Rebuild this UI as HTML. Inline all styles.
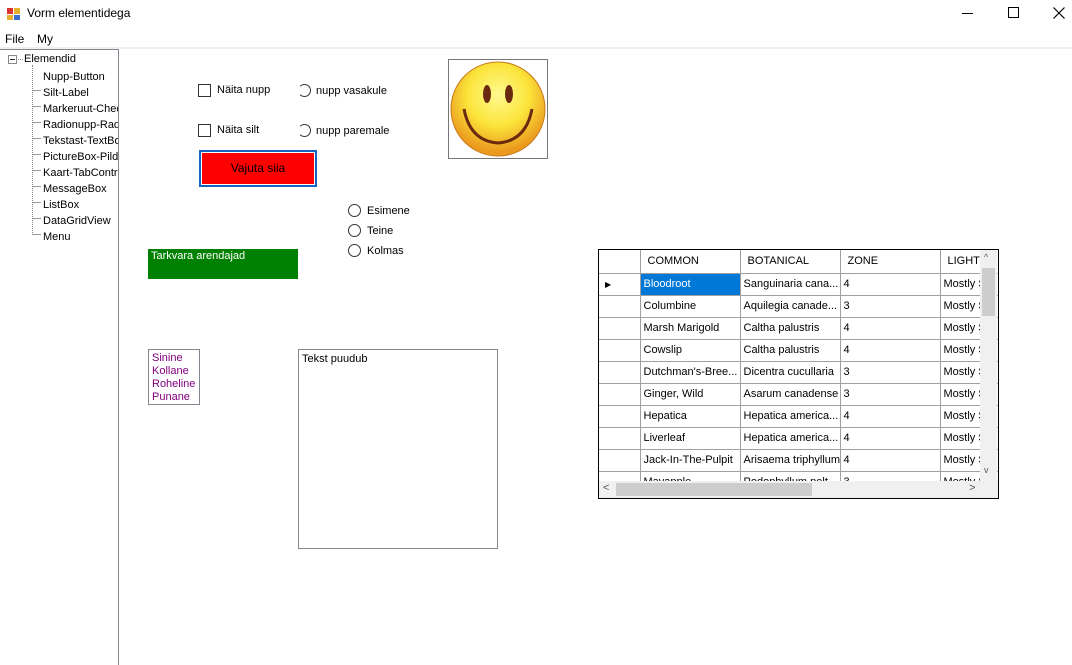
<!DOCTYPE html>
<html><head><meta charset="utf-8"><style>
*{margin:0;padding:0;box-sizing:border-box}
body{width:1072px;height:665px;background:#fff;font-family:"Liberation Sans",sans-serif;font-size:11px;color:#000;position:relative;overflow:hidden}
.a{position:absolute;white-space:nowrap}
.cb{position:absolute;width:13px;height:13px;border:1px solid #333;background:#fff}
.rb{position:absolute;width:13px;height:13px;border:1px solid #333;border-radius:50%;background:#fff}
.grid{position:absolute;left:598px;top:249px;width:401px;height:250px;border:1px solid #000;background:#fff;overflow:hidden}
.grid table{border-collapse:collapse;position:absolute;left:0;top:0;table-layout:fixed;width:401px}
.grid td{height:22px;border-right:1px solid #a0a0a0;border-bottom:1px solid #a0a0a0;padding:0 3px;font-size:11px;white-space:nowrap;overflow:hidden}
.grid tr.h td{height:23px;padding-left:7px}
</style></head><body>
<svg class="a" style="left:7px;top:7px" width="14" height="14"><rect x="0" y="1" width="6" height="6" fill="#d33"/><rect x="7" y="1" width="6" height="6" fill="#e8b030"/><rect x="0" y="8" width="6" height="5" fill="#e8b030"/><rect x="7" y="8" width="6" height="5" fill="#3a6fd0"/></svg>
<div class="a" style="left:27px;top:6px;font-size:12px">Vorm elementidega</div>
<div class="a" style="left:962px;top:13px;width:11px;height:1px;background:#000"></div>
<div class="a" style="left:1008px;top:7px;width:11px;height:11px;border:1px solid #000"></div>
<svg class="a" style="left:1053px;top:7px" width="12" height="12"><path d="M0.5 0.5L11.5 11.5M11.5 0.5L0.5 11.5" stroke="#000" stroke-width="1.2"/></svg>
<div class="a" style="left:5px;top:32px;font-size:12px">File</div>
<div class="a" style="left:37px;top:32px;font-size:12px">My</div>
<div class="a" style="left:0;top:47px;width:1072px;height:2px;background:#f0f0f0"></div>
<!-- tree -->
<div class="a" style="left:0;top:49px;width:119px;height:616px;border-right:1px solid #828790;border-top:1px solid #828790;overflow:hidden">
<div class="a" style="left:8px;top:5px;width:9px;height:9px;border:1px solid #888"><div style="position:absolute;left:1px;top:3px;width:5px;height:1px;background:#333"></div></div>
<div class="a" style="left:18px;top:9px;width:5px;border-top:1px dotted #888"></div>
<div class="a" style="left:24px;top:3px">Elemendid</div>
<div class="a" style="left:32px;top:15px;height:170px;border-left:1px dotted #888"></div>
<div class="a" style="left:43px;top:19px;line-height:16px">
Nupp-Button<br>Silt-Label<br>Markeruut-Chec<br>Radionupp-Rad<br>Tekstast-TextBo<br>PictureBox-Pildil<br>Kaart-TabContro<br>MessageBox<br>ListBox<br>DataGridView<br>Menu</div>
<div class="a" style="left:33px;top:25px;width:8px;height:161px;background:repeating-linear-gradient(to bottom,transparent 0,transparent 15px,#999 15px,#999 16px)"></div>
</div>
<!-- checkboxes -->
<div class="cb" style="left:198px;top:84px"></div><div class="a" style="left:217px;top:84px">Näita nupp</div>
<div class="cb" style="left:198px;top:124px"></div><div class="a" style="left:217px;top:124px">Näita silt</div>
<div class="a" style="left:298px;top:84px;width:13px;height:13px;border:1px solid #333;border-radius:50%;border-left-color:transparent;border-bottom-color:#333"></div>
<div class="a" style="left:316px;top:85px">nupp vasakule</div>
<div class="a" style="left:298px;top:124px;width:13px;height:13px;border:1px solid #333;border-radius:50%;border-left-color:transparent"></div>
<div class="a" style="left:316px;top:125px">nupp paremale</div>
<div class="a" style="left:199px;top:150px;width:118px;height:37px;border:2px solid #1565c0;background:#fff;padding:1px"><div style="background:#f00;width:100%;height:100%;text-align:center;line-height:31px;font-size:12px">Vajuta siia</div></div>
<!-- smiley -->
<div class="a" style="left:448px;top:59px;width:100px;height:100px;border:1px solid #777;background:#fff"></div>
<svg class="a" style="left:450px;top:61px" width="96" height="96"><defs><radialGradient id="g" cx="50%" cy="35%" r="60%"><stop offset="0" stop-color="#fffa90"/><stop offset=".55" stop-color="#fbe43a"/><stop offset="1" stop-color="#eb9a1e"/></radialGradient></defs><circle cx="48" cy="48" r="47" fill="url(#g)" stroke="#c87818"/><ellipse cx="37" cy="33" rx="4" ry="9" fill="#6b2a10"/><ellipse cx="59" cy="33" rx="4" ry="9" fill="#6b2a10"/><path d="M14 48 Q20 80 48 82 Q76 80 82 48" fill="none" stroke="#6b2a10" stroke-width="3"/></svg>
<!-- radios -->
<div class="rb" style="left:348px;top:204px"></div><div class="a" style="left:367px;top:205px">Esimene</div>
<div class="rb" style="left:348px;top:224px"></div><div class="a" style="left:367px;top:225px">Teine</div>
<div class="rb" style="left:348px;top:244px"></div><div class="a" style="left:367px;top:245px">Kolmas</div>
<div class="a" style="left:148px;top:249px;width:150px;height:30px;background:#008000;color:#fff;padding:1px 3px">Tarkvara arendajad</div>
<div class="a" style="left:148px;top:349px;width:52px;height:56px;border:1px solid #828790;color:#800080;padding:2px 3px;line-height:13px">Sinine<br>Kollane<br>Roheline<br>Punane</div>
<div class="a" style="left:298px;top:349px;width:200px;height:200px;border:1px solid #828790;padding:3px 3px">Tekst puudub</div>
<!-- grid -->
<div class="grid">
<table>
<colgroup><col style="width:41px"><col style="width:100px"><col style="width:100px"><col style="width:100px"><col style="width:60px"></colgroup>
<tr class="h"><td></td><td>COMMON</td><td>BOTANICAL</td><td>ZONE</td><td>LIGHT</td></tr>
<tr><td style="padding-left:6px;font-size:8px">▶</td><td style="background:#0078d7;color:#fff">Bloodroot</td><td>Sanguinaria cana...</td><td>4</td><td>Mostly S</td></tr>
<tr><td></td><td>Columbine</td><td>Aquilegia canade...</td><td>3</td><td>Mostly S</td></tr>
<tr><td></td><td>Marsh Marigold</td><td>Caltha palustris</td><td>4</td><td>Mostly S</td></tr>
<tr><td></td><td>Cowslip</td><td>Caltha palustris</td><td>4</td><td>Mostly S</td></tr>
<tr><td></td><td>Dutchman's-Bree...</td><td>Dicentra cucullaria</td><td>3</td><td>Mostly S</td></tr>
<tr><td></td><td>Ginger, Wild</td><td>Asarum canadense</td><td>3</td><td>Mostly S</td></tr>
<tr><td></td><td>Hepatica</td><td>Hepatica america...</td><td>4</td><td>Mostly S</td></tr>
<tr><td></td><td>Liverleaf</td><td>Hepatica america...</td><td>4</td><td>Mostly S</td></tr>
<tr><td></td><td>Jack-In-The-Pulpit</td><td>Arisaema triphyllum</td><td>4</td><td>Mostly S</td></tr>
<tr><td></td><td>Mayapple</td><td>Podophyllum pelt...</td><td>3</td><td>Mostly S</td></tr>
</table>
<div class="a" style="left:381px;top:0;width:17px;height:231px;background:#f0f0f0"><div style="position:absolute;left:2px;top:18px;width:13px;height:48px;background:#cdcdcd"></div><div style="position:absolute;left:4px;top:2px;font-size:9px;color:#555">^</div><div style="position:absolute;left:4px;top:215px;font-size:9px;color:#555">v</div></div>
<div class="a" style="left:0;top:231px;width:399px;height:17px;background:#f0f0f0"><div style="position:absolute;left:17px;top:2px;width:196px;height:13px;background:#cdcdcd"></div><div style="position:absolute;left:4px;top:1px;font-size:11px;color:#555">&lt;</div><div style="position:absolute;left:370px;top:1px;font-size:11px;color:#555">&gt;</div></div>
</div>
</body></html>
